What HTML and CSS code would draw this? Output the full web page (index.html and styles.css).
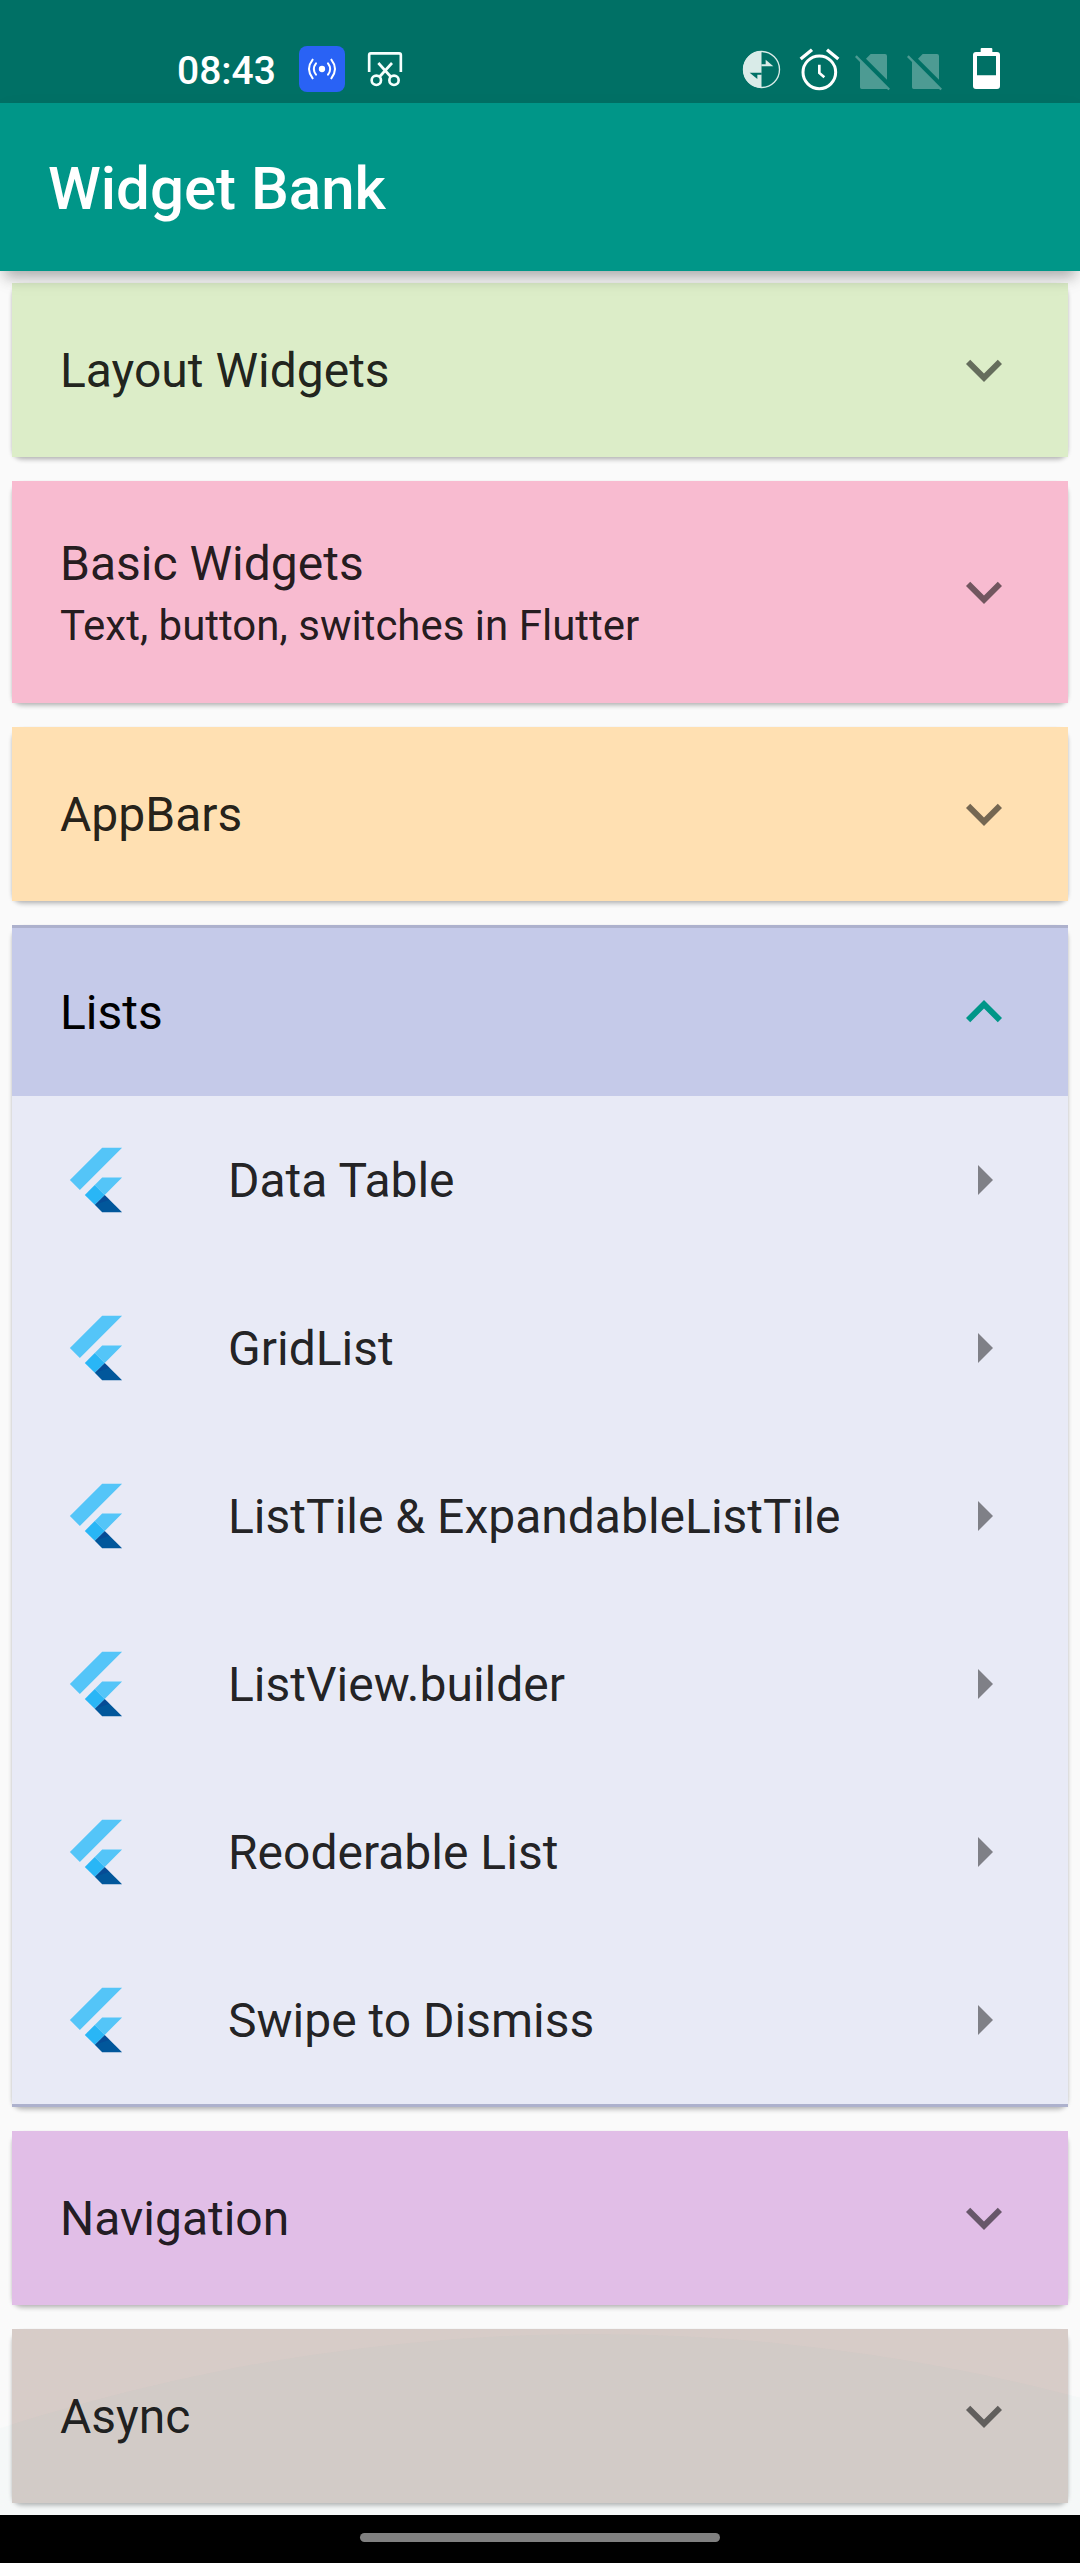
FILE: index.html
```html
<!DOCTYPE html>
<html lang="en">
<head>
<meta charset="utf-8">
<title>Widget Bank</title>
<link rel="stylesheet" href="styles.css">
</head>
<body>
<svg class="defs" width="0" height="0" aria-hidden="true">
  <symbol id="expand-more" viewBox="0 0 24 24"><path d="M16.59 8.59L12 13.17 7.41 8.59 6 10l6 6 6-6z"/></symbol>
  <symbol id="expand-less" viewBox="0 0 24 24"><path d="M12 8l-6 6 1.41 1.41L12 10.83l4.59 4.58L18 14z"/></symbol>
  <symbol id="arrow-right" viewBox="0 0 24 24"><path d="M10 17l5-5-5-5v10z"/></symbol>
  <symbol id="flutter" viewBox="0 0 166 202">
    <path fill="#54c5f8" d="M37.7 128.9L9.8 101 100.4 10.4h55.8zM156.2 94h-55.8l-20.9 20.9 27.9 27.9z"/>
    <path fill="#01579b" d="M79.5 170.7l20.9 20.9h55.8l-48.8-48.8z"/>
    <path fill="#29b6f6" d="M79.5 114.9l27.9 27.9-27.9 27.9-27.9-27.9z"/>
    <path fill="#1a237e" fill-opacity=".22" d="M79.5 170.7l41.4-14.4-13.5-13.5z"/>
  </symbol>
  <symbol id="no-sim" viewBox="0 0 111 144">
    <path d="M36 38L50 24h43q6 0 6 6v71zM18 43l81 81v5H23q-5 0-5-5z"/>
    <path d="M8 28L108 128l-5 5L3 33z"/>
  </symbol>
</svg>

<header class="status-bar">
  <span class="clock">08:43</span>
  <svg class="cast" viewBox="417 48 138 144">
    <rect x="417" y="48" width="138" height="138" rx="24" fill="#2962f5"/>
    <circle cx="486" cy="117" r="9.5" fill="#fff"/>
    <g fill="none" stroke="#fff" stroke-width="6" stroke-linecap="round">
      <path d="M468 100q-13 17 0 34M504 100q13 17 0 34M458 89q-22 28 0 56M514 89q22 28 0 56"/>
    </g>
  </svg>
  <svg class="snip" viewBox="618 48 114 144" fill="none" stroke="#f5fffd" stroke-width="8">
    <path d="M627.500 126V75q0-5 5-5h85q5 0 5 5v51"/>
    <circle cx="649" cy="151" r="14"/><circle cx="702" cy="151" r="14"/>
    <path d="M655 99l38 42M696 99l-38 42"/>
  </svg>
  <div class="system-icons">
    <svg class="data-saver" viewBox="66 48 117 144">
      <circle cx="124.500" cy="118.500" r="54" fill="none" stroke="#d9ebe8" stroke-width="4"/>
      <path fill="#d9ebe8" d="M124.500 63a55.500 55.500 0 0 0 0 111zM124 103h13V89l23 20h-36z"/>
      <path fill="#007065" d="M125 134h-13v13l-23-19h36z"/>
    </svg>
    <svg class="alarm" viewBox="237 48 123 144" fill="none" stroke="#fff">
      <circle cx="298" cy="127" r="49" stroke-width="9"/>
      <path stroke-width="8" d="M298 104v25l15 13"/>
      <path stroke-width="10" d="M242 87l34-28M355 87l-34-28"/>
    </svg>
    <svg class="sim"><use href="#no-sim"/></svg>
    <svg class="sim"><use href="#no-sim"/></svg>
    <svg class="battery" viewBox="756 48 87 144">
      <path fill="#fff" fill-rule="evenodd" d="M782 66V57q0-3 3-3h29q3 0 3 3v9h14q9 0 9 9v93q0 9-9 9h-63q-9 0-9-9V75q0-9 9-9zM771 78v58h57V78z"/>
    </svg>
  </div>
</header>

<div class="app-bar"><h1>Widget Bank</h1></div>

<main class="bank">
  <section class="card">
    <div class="tile lime"><h2>Layout Widgets</h2><svg class="icon"><use href="#expand-more"/></svg></div>
  </section>
  <section class="card">
    <div class="tile tall pink">
      <div class="labels"><h2>Basic Widgets</h2><p>Text, button, switches in Flutter</p></div>
      <svg class="icon"><use href="#expand-more"/></svg>
    </div>
  </section>
  <section class="card">
    <div class="tile orange"><h2>AppBars</h2><svg class="icon"><use href="#expand-more"/></svg></div>
  </section>
  <section class="card expanded">
    <div class="tile indigo"><h2>Lists</h2><svg class="icon"><use href="#expand-less"/></svg></div>
    <ul class="items">
      <li><svg class="logo"><use href="#flutter"/></svg><span>Data Table</span><svg class="icon"><use href="#arrow-right"/></svg></li>
      <li><svg class="logo"><use href="#flutter"/></svg><span>GridList</span><svg class="icon"><use href="#arrow-right"/></svg></li>
      <li><svg class="logo"><use href="#flutter"/></svg><span>ListTile &amp; ExpandableListTile</span><svg class="icon"><use href="#arrow-right"/></svg></li>
      <li><svg class="logo"><use href="#flutter"/></svg><span>ListView.builder</span><svg class="icon"><use href="#arrow-right"/></svg></li>
      <li><svg class="logo"><use href="#flutter"/></svg><span>Reoderable List</span><svg class="icon"><use href="#arrow-right"/></svg></li>
      <li><svg class="logo"><use href="#flutter"/></svg><span>Swipe to Dismiss</span><svg class="icon"><use href="#arrow-right"/></svg></li>
    </ul>
  </section>
  <section class="card">
    <div class="tile purple"><h2>Navigation</h2><svg class="icon"><use href="#expand-more"/></svg></div>
  </section>
  <section class="card">
    <div class="tile brown"><h2>Async</h2><svg class="icon"><use href="#expand-more"/></svg></div>
  </section>
  <svg class="overscroll" viewBox="0 0 1080 185"><circle cx="592" cy="1911" r="1907"/></svg>
</main>

<footer class="nav-bar"><span class="handle"></span></footer>
</body>
</html>
```

FILE: styles.css
```css
* { box-sizing: border-box; }

body {
  margin: 0;
  width: 1080px;
  height: 2563px;
  display: flex;
  flex-direction: column;
  overflow: hidden;
  background: #fafafa;
  font-family: Roboto, "Liberation Sans", sans-serif;
  color: rgba(0, 0, 0, .87);
}

h1, h2, p, ul { margin: 0; padding: 0; }
.defs { position: absolute; }
svg { display: block; flex: none; }

.status-bar {
  height: 103px;
  padding: 46px 79px 0 177px;
  display: flex;
  background: #007065;
  color: #fff;
}
.status-bar svg { height: 48px; }
.clock {
  width: 122px;
  padding-top: 1px;
  font-size: 39px;
  font-weight: 500;
  line-height: 48px;
}
.cast { width: 46px; margin-right: 21px; }
.snip { width: 38px; }
.system-icons { display: flex; margin-left: auto; }
.data-saver { width: 39px; margin-right: 18px; }
.alarm { width: 41px; margin-right: 14px; }
.sim { width: 37px; margin-right: 15px; fill: #4d9b93; }
.sim + .battery { margin-left: 14px; }
.battery { width: 29px; }

.app-bar {
  position: relative;
  z-index: 1;
  height: 168px;
  padding: 4px 48px 0;
  display: flex;
  align-items: center;
  background: #009688;
  color: #fff;
  box-shadow: 0 11px 13px -5px rgba(0, 0, 0, .24), 0 8px 22px -4px rgba(0, 0, 0, .12);
}
h1 { font-size: 60px; font-weight: 500; line-height: 70px; }

.bank {
  position: relative;
  height: 2244px;
  padding: 12px;
  display: flex;
  flex-direction: column;
  gap: 24px;
}
.card {
  border-radius: 10px;
  box-shadow: 0 3px 4px rgba(0, 0, 0, .22), 0 1px 3px rgba(0, 0, 0, .06);
}
.tile {
  height: 174px;
  padding: 0 48px;
  display: flex;
  align-items: center;
  justify-content: space-between;
}
.tall { height: 222px; }
h2, .items span { padding-top: 2px; font-size: 48px; font-weight: 400; line-height: 56px; }
.labels { display: grid; gap: 9px; padding-bottom: 1px; }
.labels p { font-size: 42px; line-height: 49px; }
.icon { width: 72px; height: 72px; fill: rgba(0, 0, 0, .54); }

.lime { background: #dcedc8; }
.pink { background: #f8bbd0; }
.orange { background: #ffe0b2; }
.purple { background: #e1bee7; }
.brown { background: #d7ccc8; }
.indigo { height: 168px; background: #c5cae9; color: #000; }
.indigo .icon { fill: #009688; }
.expanded::before, .expanded::after {
  content: "";
  display: block;
  height: 3px;
  background: #adb1cd;
}

.items { list-style: none; background: #e8eaf6; }
.items li {
  height: 168px;
  padding: 0 48px;
  display: flex;
  align-items: center;
}
.items .logo { width: 72px; height: 72px; margin-right: 96px; }
.items span { flex: 1; }
.items .icon { fill: rgba(0, 0, 0, .45); }

.overscroll {
  position: absolute;
  left: 0;
  bottom: 0;
  width: 1080px;
  height: 185px;
  fill: rgba(0, 150, 136, .018);
  pointer-events: none;
}

.nav-bar {
  height: 48px;
  padding-top: 18px;
  display: flex;
  justify-content: center;
  background: #000;
}
.handle { width: 360px; height: 9px; border-radius: 5px; background: #808080; }
```
